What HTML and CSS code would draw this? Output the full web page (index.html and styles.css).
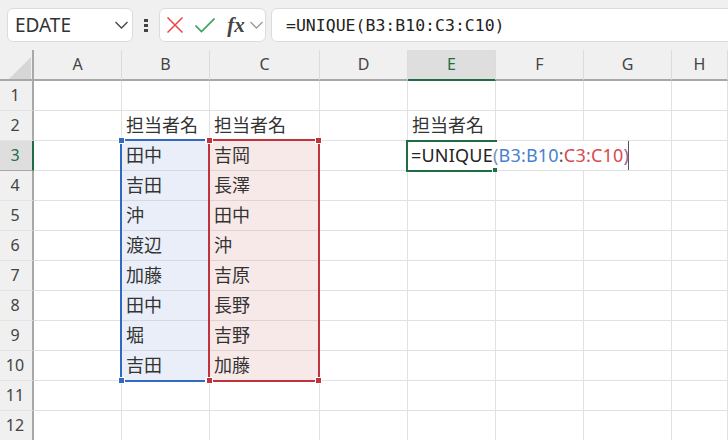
FILE: index.html
```html
<!DOCTYPE html>
<html lang="ja">
<head>
    <meta charset="UTF-8">
    <title>UNIQUE</title>
    <link rel="stylesheet" href="styles.css">
</head>
<body>
    <div class="formula-bar">
        <div class="box name-box">
            <span>EDATE</span>
            <svg width="13" height="8" viewBox="0 0 13 8"><path d="M.5 1l6 6 6-6" fill="none" stroke="#444" stroke-width="1.300"/></svg>
        </div>
        <div class="dots"><i></i><i></i><i></i></div>
        <div class="box icon-box">
            <svg width="16" height="16" viewBox="0 0 16 16"><path d="M.5.5l15 15M15.500.5l-15 15" fill="none" stroke="#e8434a" stroke-width="1.500"/></svg>
            <svg width="20" height="15" viewBox="0 0 20 15"><path d="M.5 7.500l6 6L19.500.5" fill="none" stroke="#3da35a" stroke-width="1.600"/></svg>
            <span class="fx">fx</span>
            <svg width="13" height="8" viewBox="0 0 13 8"><path d="M.5 1l6 6 6-6" fill="none" stroke="#999" stroke-width="1.300"/></svg>
        </div>
        <div class="box formula-box">=UNIQUE(B3:B10:C3:C10)</div>
    </div>

    <div class="sheet">
        <div class="row head-row">
            <div class="corner"><svg width="22" height="22" viewBox="0 0 22 22"><path d="M22 0v22H0z" fill="#d6d6d6"/></svg></div>
            <div class="col-head">A</div><div class="col-head">B</div><div class="col-head">C</div><div class="col-head">D</div><div class="col-head active">E</div><div class="col-head">F</div><div class="col-head">G</div><div class="col-head">H</div>
        </div>
        <div class="row"><div class="row-head">1</div><div></div><div></div><div></div><div></div><div></div><div></div><div></div><div></div></div>
        <div class="row"><div class="row-head">2</div><div></div><div>担当者名</div><div>担当者名</div><div></div><div>担当者名</div><div></div><div></div><div></div></div>
        <div class="row"><div class="row-head active">3</div><div></div><div class="blue">田中</div><div class="red">吉岡</div><div></div><div></div><div></div><div></div><div></div></div>
        <div class="row"><div class="row-head">4</div><div></div><div class="blue">吉田</div><div class="red">長澤</div><div></div><div></div><div></div><div></div><div></div></div>
        <div class="row"><div class="row-head">5</div><div></div><div class="blue">沖</div><div class="red">田中</div><div></div><div></div><div></div><div></div><div></div></div>
        <div class="row"><div class="row-head">6</div><div></div><div class="blue">渡辺</div><div class="red">沖</div><div></div><div></div><div></div><div></div><div></div></div>
        <div class="row"><div class="row-head">7</div><div></div><div class="blue">加藤</div><div class="red">吉原</div><div></div><div></div><div></div><div></div><div></div></div>
        <div class="row"><div class="row-head">8</div><div></div><div class="blue">田中</div><div class="red">長野</div><div></div><div></div><div></div><div></div><div></div></div>
        <div class="row"><div class="row-head">9</div><div></div><div class="blue">堀</div><div class="red">吉野</div><div></div><div></div><div></div><div></div><div></div></div>
        <div class="row"><div class="row-head">10</div><div></div><div class="blue">吉田</div><div class="red">加藤</div><div></div><div></div><div></div><div></div><div></div></div>
        <div class="row"><div class="row-head">11</div><div></div><div></div><div></div><div></div><div></div><div></div><div></div><div></div></div>
        <div class="row"><div class="row-head">12</div><div></div><div></div><div></div><div></div><div></div><div></div><div></div><div></div></div>

        <div class="range range-blue"><i class="h tl"></i><i class="h tr"></i><i class="h bl"></i><i class="h br"></i></div>
        <div class="range range-red"><i class="h tl"></i><i class="h tr"></i><i class="h bl"></i><i class="h br"></i></div>

        <div class="edit-text">=UNIQUE<span class="paren">(</span><span class="ref-blue">B3:B10</span><span class="ref-sep">:</span><span class="ref-red">C3:C10</span><span class="paren-end">)</span></div>
        <div class="edit-cell"><i class="fill-handle"></i></div>
    </div>
</body>
</html>
```

FILE: styles.css
```css
html, body {
    margin: 0;
    height: 440px;
    overflow: hidden;
}
body {
    background: #f0f0f0;
    font-family: "Noto Sans", "Noto Sans CJK JP", sans-serif;
    color: #333;
}

.formula-bar {
    display: flex;
    align-items: flex-start;
    height: 50px;
    padding: 8px 0 0 7px;
    box-sizing: border-box;
    overflow: hidden;
}
.box {
    display: flex;
    flex: none;
    align-items: center;
    box-sizing: border-box;
    height: 34px;
    background: #fff;
    border: 1px solid #dcdcdc;
    border-radius: 6px;
}
.name-box {
    width: 126px;
    justify-content: space-between;
    padding: 0 4px 0 7px;
    font-size: 19px;
}
.dots {
    display: flex;
    flex: none;
    flex-direction: column;
    gap: 2px;
    width: 26px;
    padding-top: 11px;
    align-items: center;
}
.dots i {
    width: 4px;
    height: 3px;
    background: #444;
}
.icon-box {
    width: 107px;
    padding-left: 7px;
    gap: 12px;
}
.icon-box svg:last-child {
    margin-left: -8px;
}
.fx {
    width: 20px;
    margin-left: -1px;
    font-family: "Liberation Serif", serif;
    font-style: italic;
    font-weight: bold;
    font-size: 21px;
    line-height: 1;
    text-align: center;
    color: #444;
}
.formula-box {
    width: 470px;
    margin-left: 5px;
    padding: 1px 0 0 14px;
    font-family: "DejaVu Sans Mono", monospace;
    font-size: 16.5px;
    color: #222;
}

.sheet {
    position: relative;
}
.row {
    display: grid;
    grid-template-columns: 34px 88px 88px 110px 88px 88px 88px 88px 56px;
    height: 30px;
    background: #fff;
}
.row > div {
    box-sizing: border-box;
    border-right: 1px solid #e1e1e1;
    border-bottom: 1px solid #e1e1e1;
    padding-left: 4px;
    font-size: 18px;
    line-height: 29px;
    white-space: nowrap;
}
.row > .row-head {
    background: #f0f0f0;
    border-right: 2px solid #a8a8a8;
    border-bottom: 1px solid #e4e4e4;
    padding: 0 2px 0 0;
    text-align: center;
    font-size: 16px;
    color: #444;
}
.row > .row-head.active {
    background: #dedede;
    color: #1f6e43;
    border-right: 2px solid #1f6e43;
    border-bottom-color: #a8a8a8;
}
.head-row {
    height: 31px;
    background: #f0f0f0;
}
.row > .corner {
    padding: 7px 0 0 9px;
    border-right: 2px solid #a8a8a8;
    border-bottom: 2px solid #a8a8a8;
    line-height: 0;
}
.row > .col-head {
    padding: 0;
    text-align: center;
    font-size: 16px;
    line-height: 29px;
    color: #444;
    border-right: 1px solid #dcdcdc;
    border-bottom: 2px solid #a8a8a8;
}
.row > .col-head.active {
    background: #dedede;
    color: #1f6e43;
    border-bottom: 2px solid #1f6e43;
}
.row > .blue {
    background: #e9eef8;
    border-bottom-color: #d6d8de;
    border-right-color: transparent;
}
.row > .red {
    background: #f8e9e9;
    border-bottom-color: #dcd4d6;
    border-right-color: transparent;
}

/* overlays for the formula references */
.range {
    position: absolute;
    box-sizing: border-box;
    top: 89px;
    height: 243px;
    border: 2px solid;
}
.range-blue {
    left: 120px;
    width: 90px;
    border-color: #3269c0;
    color: #3269c0;
}
.range-red {
    left: 208px;
    width: 112px;
    border-color: #c0323c;
    color: #c0323c;
}
.h {
    position: absolute;
    width: 5px;
    height: 5px;
    background: currentColor;
    border: 1px solid #fff;
}
.tl { left: -4px; top: -4px; }
.tr { right: -4px; top: -4px; }
.bl { left: -4px; bottom: -4px; }
.br { right: -4px; bottom: -4px; }

.edit-cell {
    position: absolute;
    box-sizing: border-box;
    left: 406px;
    top: 90px;
    width: 91px;
    height: 32px;
    border: 2px solid #1f6e43;
    border-right: 0;
}
.fill-handle {
    position: absolute;
    right: 0;
    bottom: -2px;
    width: 4px;
    height: 4px;
    background: #1f6e43;
    border-left: 1px solid #fff;
}
.edit-text {
    position: absolute;
    left: 411px;
    top: 91px;
    width: 217px;
    height: 29px;
    border-right: 1px solid #555;
    background: #fff;
    font-size: 18px;
    letter-spacing: 0.2px;
    line-height: 29px;
    white-space: nowrap;
    color: #222;
}
.paren { color: #7c8fb0; }
.ref-blue { color: #4a7fd0; }
.ref-sep { color: #555; }
.ref-red { color: #d84a50; }
.paren-end { color: #9a5f90; }
```
